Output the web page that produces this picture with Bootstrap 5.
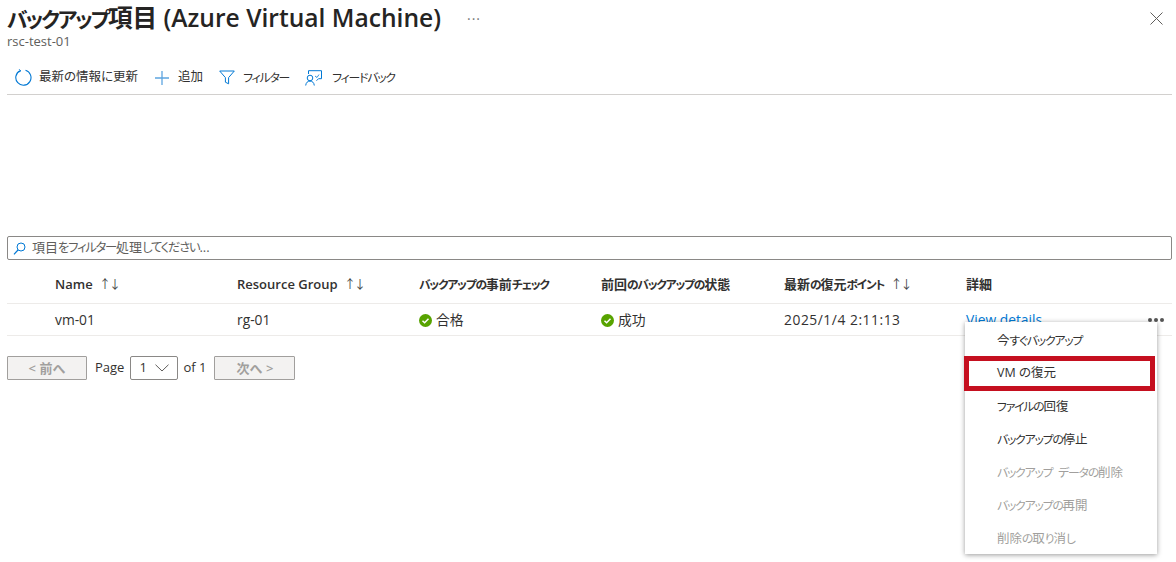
<!DOCTYPE html>
<html lang="ja">
<head>
<meta charset="utf-8">
<title>バックアップ項目</title>
<link href="https://cdn.jsdelivr.net/npm/bootstrap@5.3.0/dist/css/bootstrap.min.css" rel="stylesheet">
<style>
html,body{height:562px;overflow:hidden}
body{font-family:"Open Sans","Noto Sans CJK JP",sans-serif;font-size:13px;color:#323130;background:#fff;font-feature-settings:"palt"}
.kn{font-size:.9em;letter-spacing:-.1em}
.shell{position:relative;height:562px;padding:0 4px 0 7px}
.title-row{height:34px}
.blade-title{font-size:24.6px;line-height:35px;font-weight:600;color:#252423;margin:0;white-space:nowrap}
.blade-title .kn{font-size:.85em}
.title-more{margin-left:26px;color:#777;font-size:14px;line-height:20px;letter-spacing:1px}
.close-x{margin-right:9px;margin-top:12px}
.blade-sub{font-size:13px;line-height:14px;color:#605e5c;height:15px}
.cmdbar{height:46px;border-bottom:1px solid #d2d0ce;padding:12px 0 0 8px;gap:16px}
.cmd{font-size:12.5px;color:#323130;gap:7px;white-space:nowrap}
.cmd .kn{font-size:.95em;letter-spacing:-.1em}
.cmd-plus{gap:8px}
.cmd-filter{gap:8px}
.cmd-fb{gap:10px}
.cmd svg{flex:none}
.spacer{height:141px}
.filterbox{height:24px;border:1px solid #8a8886;border-radius:2px;padding-left:5px;gap:6px;color:#605e5c;font-size:13px}
.filterbox .kn{font-size:.95em;letter-spacing:-.1em}
.tbl-head,.tbl-row{display:grid;grid-template-columns:48px 182px 182px 182px 183px 182px 1fr;align-items:center;white-space:nowrap}
.tbl-head{height:44px;padding-top:7px;border-bottom:1px solid #edebe9;font-size:13px;font-weight:600;color:#323130}
.tbl-row{height:32px;padding-top:1px;border-bottom:1px solid #edebe9;font-size:13.8px;position:relative}
.sort{font-weight:400;margin-left:3px;font-size:12px;letter-spacing:-2px;color:#444}
.stat{gap:4px}
.dt{letter-spacing:.55px}
.vlink{color:#0078d4;text-decoration:none}
.row-more{position:absolute;right:8px;top:14px;gap:2px}
.row-more i{display:block;width:4px;height:4px;border-radius:50%;background:#555}
.pager{margin-top:20px;gap:8px;font-size:13px}
.pgbtn{width:80px;height:24px;background:#f3f2f1;border:1px solid #a19f9d;border-radius:1px;color:#a19f9d;font-size:13px;font-weight:600;padding:0;line-height:20px}
.pgbtn.next{width:81px}
.pgsel{width:48px;height:24px;border:1px solid #8a8886;border-radius:2px;padding:0 8px;margin:0 -3px 0 -2px}
.ctxmenu{position:absolute;left:965px;top:322px;width:192px;height:232px;background:#fff;box-shadow:0 1px 5px rgba(0,0,0,.4);padding:2px 0;z-index:5}
.ctxitem{height:33px;line-height:33px;padding-left:32px;font-size:12.5px;color:#323130;white-space:nowrap}
.ctxitem .kn{font-size:.95em;letter-spacing:-.1em;word-spacing:4px}
.ctxitem.off{color:#a19f9d}
.ctxitem.picked{border:5px solid #c50f1f;margin:-1px 2px -1px -1px;padding-left:28px;line-height:23px;height:35px;position:relative}
</style>
</head>
<body>
<div class="shell">
  <div class="title-row d-flex align-items-start justify-content-between">
    <div class="d-flex align-items-center">
      <h1 class="blade-title"><span class="kn">バックアップ</span>項目 (Azure Virtual Machine)</h1>
      <span class="title-more">···</span>
    </div>
    <svg class="close-x" width="13" height="13" viewBox="0 0 13 13"><path d="M.5.5l12 12M12.500.5l-12 12" stroke="#605e5c" fill="none"/></svg>
  </div>
  <div class="blade-sub">rsc-test-01</div>
  <div class="cmdbar d-flex align-items-center">
    <div class="cmd d-flex align-items-center">
      <svg width="17" height="17" viewBox="0 0 17 17"><path d="M10.500 1.300A7.600 7.600 0 1 1 5 1.800" fill="none" stroke="#0078d4" stroke-width="1.100"/><path d="M4.200 .3l1.600 1.700-2.200 1.100" fill="none" stroke="#0078d4"/></svg>
      <span>最新の情報に更新</span>
    </div>
    <div class="cmd cmd-plus d-flex align-items-center">
      <svg width="16" height="16" viewBox="0 0 16 16"><path d="M8 1v14M1 8h14" stroke="#5ea5e0" stroke-width="1.300" fill="none"/></svg>
      <span>追加</span>
    </div>
    <div class="cmd cmd-filter d-flex align-items-center">
      <svg width="16" height="15" viewBox="0 0 16 15"><path d="M.7 1h14.600L9.600 7.600v6.200L6.400 12.200V7.600z" fill="none" stroke="#0078d4"/></svg>
      <span class="kn">フィルター</span>
    </div>
    <div class="cmd cmd-fb d-flex align-items-center">
      <svg width="17" height="16" viewBox="0 0 17 16"><circle cx="5" cy="8" r="2.800" fill="none" stroke="#0078d4"/><path d="M.7 15.500c.3-3 2-4.400 4.300-4.400s4 1.400 4.300 4.400M3.500 4V.7h13v8h-3l-2 2" fill="none" stroke="#0078d4"/><path d="M10 6l2 1.500 2-3" fill="none" stroke="#0078d4" stroke-width=".8"/></svg>
      <span class="kn">フィードバック</span>
    </div>
  </div>
  <div class="spacer"></div>
  <div class="filterbox d-flex align-items-center">
    <svg width="13" height="13" viewBox="0 0 13 13"><circle cx="8" cy="5" r="4" fill="none" stroke="#0078d4"/><path d="M5 8l-4 4.300" stroke="#0078d4" stroke-width="1.200" fill="none"/></svg>
    <span>項目<span class="kn">をフィルター</span>処理<span class="kn">してください</span>...</span>
  </div>
  <div class="tbl-head">
    <span></span>
    <span>Name <span class="sort">↑↓</span></span>
    <span>Resource Group <span class="sort">↑↓</span></span>
    <span><span class="kn">バックアップの</span>事前<span class="kn">チェック</span></span>
    <span>前回<span class="kn">のバックアップの</span>状態</span>
    <span>最新<span class="kn">の</span>復元<span class="kn">ポイント</span> <span class="sort">↑↓</span></span>
    <span>詳細</span>
  </div>
  <div class="tbl-row">
    <span></span>
    <span>vm-01</span>
    <span>rg-01</span>
    <span class="stat d-flex align-items-center">
      <svg width="13" height="13" viewBox="0 0 13 13"><circle cx="6.500" cy="6.500" r="6.500" fill="#57a300"/><path d="M3.500 6.800l2.100 2 3.900-4" fill="none" stroke="#fff" stroke-width="1.500"/></svg>
      <span>合格</span>
    </span>
    <span class="stat d-flex align-items-center">
      <svg width="13" height="13" viewBox="0 0 13 13"><circle cx="6.500" cy="6.500" r="6.500" fill="#57a300"/><path d="M3.500 6.800l2.100 2 3.900-4" fill="none" stroke="#fff" stroke-width="1.500"/></svg>
      <span>成功</span>
    </span>
    <span class="dt">2025/1/4 2:11:13</span>
    <a class="vlink" href="#">View details</a>
    <div class="row-more d-flex"><i></i><i></i><i></i></div>
  </div>
  <div class="pager d-flex align-items-center">
    <button class="pgbtn" disabled>&lt; 前へ</button>
    <span>Page</span>
    <div class="pgsel d-flex align-items-center justify-content-between">
      <span>1</span>
      <svg width="14" height="8" viewBox="0 0 14 8"><path d="M.5.700L7 7l6.500-6.300" fill="none" stroke="#605e5c"/></svg>
    </div>
    <span>of 1</span>
    <button class="pgbtn next" disabled>次へ &gt;</button>
  </div>
  <div class="ctxmenu">
    <div class="ctxitem">今<span class="kn">すぐバックアップ</span></div>
    <div class="ctxitem picked">VM の復元</div>
    <div class="ctxitem"><span class="kn">ファイルの</span>回復</div>
    <div class="ctxitem"><span class="kn">バックアップの</span>停止</div>
    <div class="ctxitem off"><span class="kn">バックアップ データの</span>削除</div>
    <div class="ctxitem off"><span class="kn">バックアップの</span>再開</div>
    <div class="ctxitem off">削除<span class="kn">の</span>取<span class="kn">り</span>消<span class="kn">し</span></div>
  </div>
</div>
<script src="https://cdn.jsdelivr.net/npm/bootstrap@5.3.0/dist/js/bootstrap.bundle.min.js"></script>
</body>
</html>
